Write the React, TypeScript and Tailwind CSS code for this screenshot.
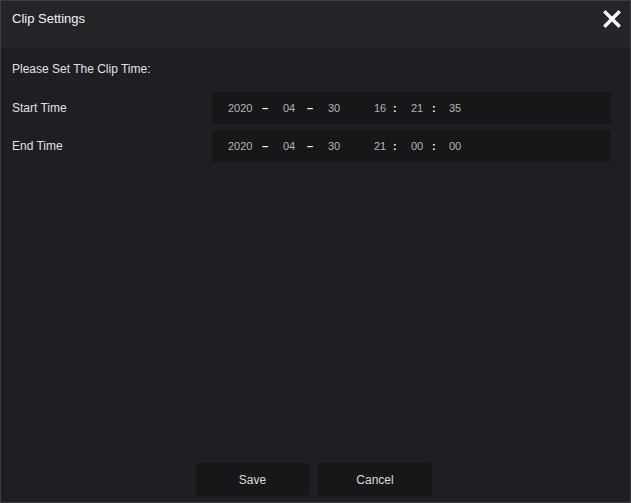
import React from "react";

type Seg = { text: string; w: number; sep?: boolean };

const startSegs: Seg[] = [
  { text: "2020", w: 34 },
  { text: "–", w: 21, sep: true },
  { text: "04", w: 24 },
  { text: "–", w: 21, sep: true },
  { text: "30", w: 46 },
  { text: "16", w: 19 },
  { text: ":", w: 18, sep: true },
  { text: "21", w: 21 },
  { text: ":", w: 17, sep: true },
  { text: "35", w: 20 },
];

const endSegs: Seg[] = [
  { text: "2020", w: 34 },
  { text: "–", w: 21, sep: true },
  { text: "04", w: 24 },
  { text: "–", w: 21, sep: true },
  { text: "30", w: 46 },
  { text: "21", w: 19 },
  { text: ":", w: 18, sep: true },
  { text: "00", w: 21 },
  { text: ":", w: 17, sep: true },
  { text: "00", w: 20 },
];

function TimeRow({ label, segs }: { label: string; segs: Seg[] }) {
  return (
    <div className="flex items-center">
      <div className="w-[200px] text-[12px] text-[#e2e2e4]">{label}</div>
      <div className="flex h-[32px] w-[399px] items-center rounded-[2px] bg-[#17171a] pl-[16px]">
        {segs.map((s, i) => (
          <span
            key={i}
            style={{ width: s.w }}
            className={
              s.sep
                ? "shrink-0 text-[11px] font-bold text-white"
                : "shrink-0 text-[11px] text-[#b4b4b6]"
            }
          >
            {s.text}
          </span>
        ))}
      </div>
    </div>
  );
}

export default function App() {
  return (
    <div
      className="flex h-[503px] w-[631px] flex-col border border-[#3c3c42] bg-[#1e1e23]"
      style={{ fontFamily: '"Liberation Sans", Arial, sans-serif' }}
    >
      {/* Header */}
      <div className="h-[47px] shrink-0 bg-[#252529]">
        <div className="flex h-[36px] items-center justify-between pl-[11px] pr-[9px]">
          <span className="text-[13px] text-[#f2f2f2]">Clip Settings</span>
          <svg width="18" height="18" viewBox="0 0 18 18">
            <path d="M2.5 2.5 L15.5 15.5 M15.5 2.5 L2.5 15.5" stroke="white" strokeWidth="3.4" strokeLinecap="square" />
          </svg>
        </div>
      </div>

      {/* Body */}
      <div className="flex flex-1 flex-col px-[11px]">
        <div className="mt-[12px] text-[12px] text-[#e2e2e4]">Please Set The Clip Time:</div>
        <div className="mt-[14px] flex flex-col gap-[6px]">
          <TimeRow label="Start Time" segs={startSegs} />
          <TimeRow label="End Time" segs={endSegs} />
        </div>

        <div className="mt-auto mb-[6px] flex justify-center gap-[9px] pr-[3px]">
          <button className="h-[33px] w-[113px] rounded-[2px] bg-[#17171a] text-[12px] text-[#dcdcdc]">
            Save
          </button>
          <button className="h-[33px] w-[114px] rounded-[2px] bg-[#17171a] text-[12px] text-[#dcdcdc]">
            Cancel
          </button>
        </div>
      </div>
    </div>
  );
}
